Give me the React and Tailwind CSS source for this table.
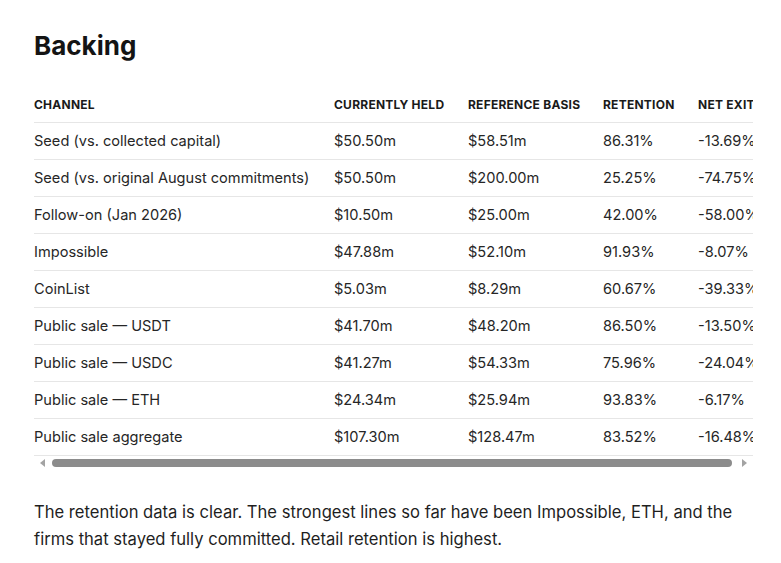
import React from 'react'

const rows = [
  ['Seed (vs. collected capital)', '$50.50m', '$58.51m', '86.31%', '-13.69%'],
  ['Seed (vs. original August commitments)', '$50.50m', '$200.00m', '25.25%', '-74.75%'],
  ['Follow-on (Jan 2026)', '$10.50m', '$25.00m', '42.00%', '-58.00%'],
  ['Impossible', '$47.88m', '$52.10m', '91.93%', '-8.07%'],
  ['CoinList', '$5.03m', '$8.29m', '60.67%', '-39.33%'],
  ['Public sale — USDT', '$41.70m', '$48.20m', '86.50%', '-13.50%'],
  ['Public sale — USDC', '$41.27m', '$54.33m', '75.96%', '-24.04%'],
  ['Public sale — ETH', '$24.34m', '$25.94m', '93.83%', '-6.17%'],
  ['Public sale aggregate', '$107.30m', '$128.47m', '83.52%', '-16.48%'],
]

const heads = [
  ['Channel', 'w-[300px]'],
  ['Currently held', 'w-[134px]'],
  ['Reference basis', 'w-[135px]'],
  ['Retention', 'w-[95px]'],
  ['Net exit', 'w-[90px]'],
]

function App() {
  return (
    <div className="min-h-screen bg-white px-[34px] pt-[30px] font-['Inter','Liberation_Sans',sans-serif] text-[#1c1c1c]">
      <h2 className="text-[26px] leading-[32px] font-bold text-[#141414]">Backing</h2>

      <div className="mt-[26px] w-[719px]">
        <div className="overflow-hidden">
          <table className="w-[754px] table-fixed border-separate border-spacing-0 text-left">
            <thead>
              <tr>
                {heads.map(([h, w]) => (
                  <th
                    key={h}
                    className={`${w} border-b border-[#e6e6e6] py-[9px] pr-3 text-[12px] leading-[16px] font-bold uppercase tracking-[0.02em] text-[#1a1a1a] whitespace-nowrap`}
                  >
                    {h}
                  </th>
                ))}
              </tr>
            </thead>
            <tbody>
              {rows.map((r, i) => (
                <tr key={i}>
                  {r.map((c, j) => (
                    <td
                      key={j}
                      className="border-b border-[#e6e6e6] py-[7px] pr-3 text-[14.6px] leading-[22px] text-[#262626] whitespace-nowrap"
                    >
                      {c}
                    </td>
                  ))}
                </tr>
              ))}
            </tbody>
          </table>
        </div>

        {/* horizontal scrollbar */}
        <div className="flex h-[14px] items-center gap-[7px] px-[6px]">
          <svg width="5" height="8" viewBox="0 0 5 8" className="shrink-0">
            <path d="M5 0 L0 4 L5 8 Z" fill="#a3a3a3" />
          </svg>
          <div className="h-[8px] flex-1 rounded-full bg-[#8c8c8c] mr-[3px]" />
          <svg width="5" height="8" viewBox="0 0 5 8" className="shrink-0">
            <path d="M0 0 L5 4 L0 8 Z" fill="#a3a3a3" />
          </svg>
        </div>
      </div>

      <p className="mt-[29px] w-[719px] text-[16.6px] leading-[27px] text-[#1f1f1f]">
        The retention data is clear. The strongest lines so far have been Impossible, ETH, and the
        firms that stayed fully committed. Retail retention is highest.
      </p>
    </div>
  )
}

export default App
